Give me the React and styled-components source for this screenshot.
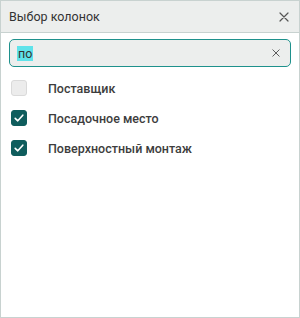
import React from "react";
import styled, { createGlobalStyle } from "styled-components";

const Global = createGlobalStyle`
  html, body { margin: 0; padding: 0; background: #fff; }
  body { font-family: Roboto, "Noto Sans", sans-serif; }
  ::selection { background: #5fe3ea; }
`;

const Panel = styled.div`
  box-sizing: border-box;
  width: 300px;
  height: 318px;
  border: 1px solid #c8d2d0;
  background: #fff;
  display: flex;
  flex-direction: column;
`;

const Header = styled.div`
  height: 31px;
  background: #eceeed;
  border-bottom: 1px solid #c8d2d0;
  display: flex;
  align-items: center;
  justify-content: space-between;
  padding: 0 9px 0 8px;
`;

const Title = styled.div`
  font-size: 12.5px;
  color: #333;
`;

const IconButton = styled.button`
  border: 0;
  background: transparent;
  padding: 0;
  width: ${(p) => p.$size}px;
  height: ${(p) => p.$size}px;
  display: flex;
  align-items: center;
  justify-content: center;
  cursor: pointer;
`;

const Body = styled.div`
  padding: 6px 8px 0 8px;
  display: flex;
  flex-direction: column;
`;

const SearchBox = styled.div`
  box-sizing: border-box;
  height: 28px;
  border: 1px solid #1e918c;
  border-radius: 5px;
  background: #eceeed;
  display: flex;
  align-items: center;
  padding: 0 9px 0 7px;
`;

const Highlight = styled.span`
  background: #5fe3ea;
  color: #333;
  font-size: 12.5px;
  line-height: 15px;
  padding: 0 1px;
`;

const Spacer = styled.div`
  flex: 1;
`;

const List = styled.div`
  display: flex;
  flex-direction: column;
  gap: 14px;
  padding: 13px 0 0 2px;
`;

const Row = styled.label`
  display: flex;
  align-items: center;
  height: 16px;
`;

const Box = styled.span`
  box-sizing: border-box;
  width: 16px;
  height: 16px;
  border-radius: 3px;
  background: ${(p) => (p.$checked ? "#0f5d5d" : "#ececec")};
  border: 1px solid ${(p) => (p.$checked ? "#0f5d5d" : "#dadada")};
  display: flex;
  align-items: center;
  justify-content: center;
  margin-right: 21px;
`;

const Label = styled.span`
  font-size: 12.5px;
  font-weight: 500;
  color: #3d3d3d;
`;

const X = ({ s, c }) => (
  <svg width={s} height={s} viewBox="0 0 10 10">
    <path d="M1 1L9 9M9 1L1 9" stroke={c} strokeWidth="1.2" strokeLinecap="round" />
  </svg>
);

const Check = () => (
  <svg width="12" height="12" viewBox="0 0 12 12">
    <path d="M2.2 6.3L4.8 8.8L9.8 3.2" fill="none" stroke="#fff" strokeWidth="1.6" strokeLinecap="round" strokeLinejoin="round" />
  </svg>
);

const items = [
  { label: "Поставщик", checked: false },
  { label: "Посадочное место", checked: true },
  { label: "Поверхностный монтаж", checked: true },
];

export default function App() {
  return (
    <>
      <Global />
      <Panel>
        <Header>
          <Title>Выбор колонок</Title>
          <IconButton $size={12}>
            <X s={10} c="#555" />
          </IconButton>
        </Header>
        <Body>
          <SearchBox>
            <Highlight>по</Highlight>
            <Spacer />
            <IconButton $size={10}>
              <X s={8} c="#555" />
            </IconButton>
          </SearchBox>
          <List>
            {items.map((it) => (
              <Row key={it.label}>
                <Box $checked={it.checked}>{it.checked && <Check />}</Box>
                <Label>{it.label}</Label>
              </Row>
            ))}
          </List>
        </Body>
      </Panel>
    </>
  );
}
